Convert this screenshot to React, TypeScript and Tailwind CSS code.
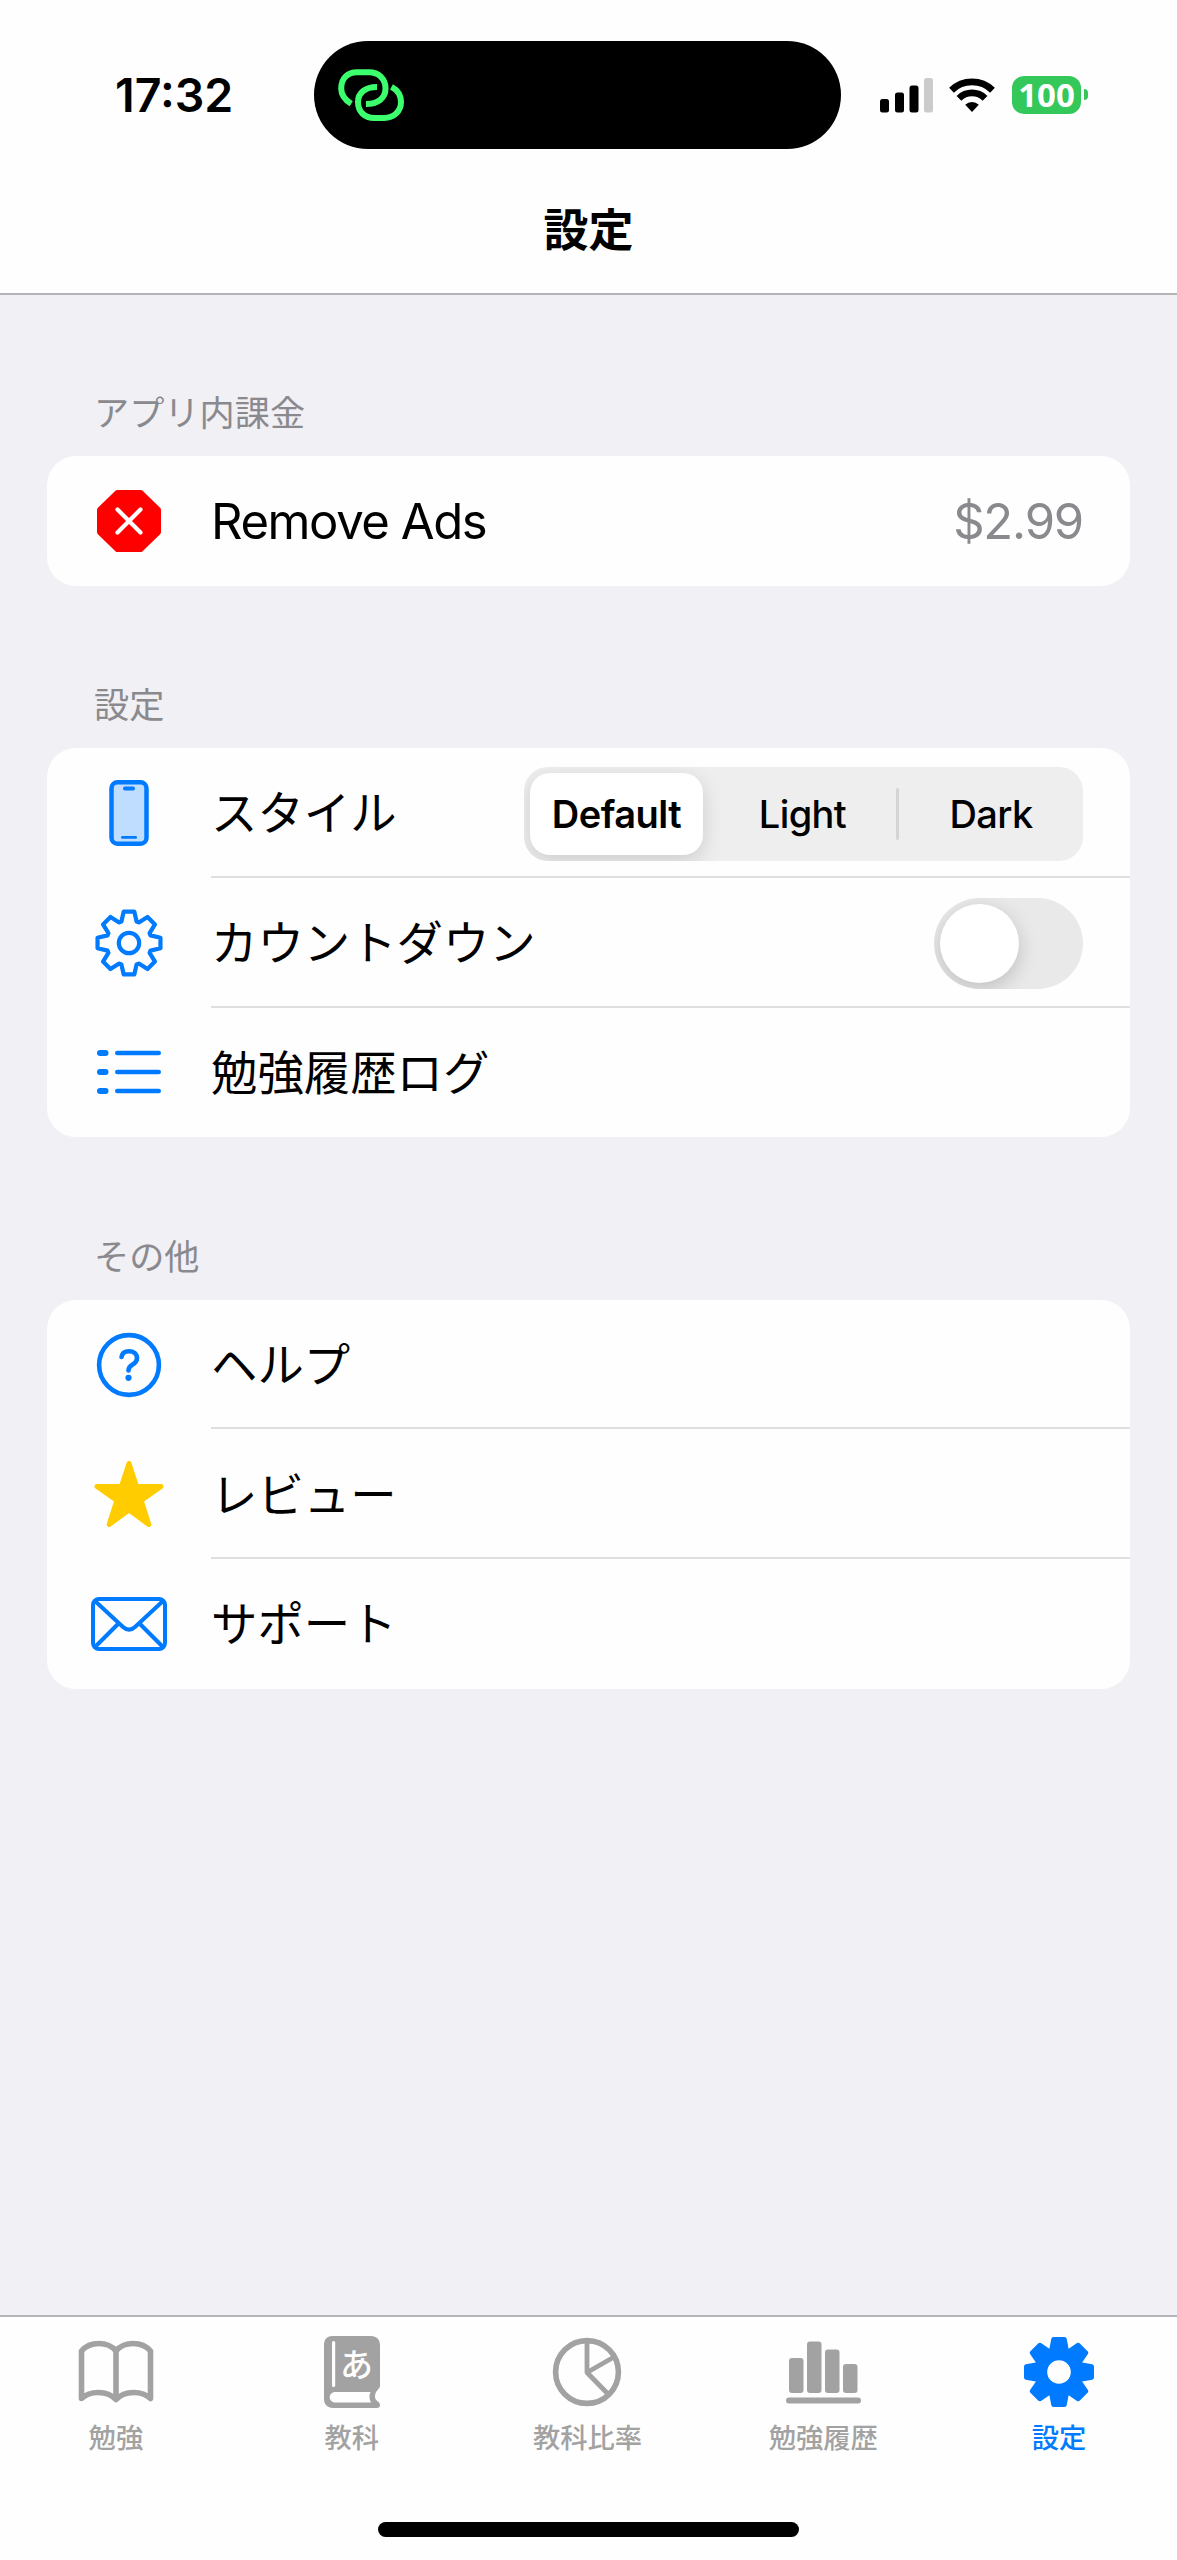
import type { ReactNode } from "react";

const BLUE = "#007aff";
const GRAY = "#a2a2a2";

/* ---------- ICONS ---------- */

// closed outline of an 8-tooth gear centred on 0,0
function gearPath(outer: number, inner: number) {
  const pts: string[] = [];
  for (let i = 0; i < 8; i++) {
    const a = i * 45;
    const ring: [number, number][] = [
      [inner, a - 19.5],
      [outer, a - 9.5],
      [outer, a + 9.5],
      [inner, a + 19.5],
    ];
    for (const [r, deg] of ring) {
      const t = ((deg - 90) * Math.PI) / 180;
      pts.push(`${(r * Math.cos(t)).toFixed(2)} ${(r * Math.sin(t)).toFixed(2)}`);
    }
  }
  return `M${pts.join("L")}Z`;
}

function LinkIcon() {
  return (
    <svg width="68" height="54" viewBox="0 0 68 54" fill="none" stroke="#3cff6e" strokeWidth="6">
      <path d="M14.2 35.8C8 32 4.2 27 4.2 20.5C4.2 10 11 4.2 20 4.2H32C42 4.2 48.5 11 48.5 20.5C48.5 30 41 36 29 36" />
      <path d="M40 19C28 19 21 25 21 34C21 44 28 50 37 50H47C57 50 64 43 64 34C64 27 60.5 22 54.5 18.8" />
    </svg>
  );
}

function SignalIcon() {
  return (
    <svg width="54" height="36" viewBox="0 0 54 36">
      <rect x="0" y="22" width="9" height="13.5" rx="2.5" />
      <rect x="15" y="15.5" width="9" height="20" rx="2.5" />
      <rect x="29.5" y="8.5" width="9" height="27" rx="2.5" />
      <rect x="44" y="1" width="9" height="34.5" rx="2.5" fill="#cbcbcb" />
    </svg>
  );
}

function WifiIcon() {
  return (
    <svg width="46" height="36" viewBox="0 0 46 36" fill="none" stroke="#000" strokeWidth="6.8">
      <path d="M2.5 13.2A29.5 29.5 0 0 1 43.5 13.2" />
      <path d="M10 21.3A18.5 18.5 0 0 1 36 21.3" />
      <path d="M16.2 27.7A9.8 9.8 0 0 1 29.8 27.7L23 35Z" fill="#000" stroke="none" />
    </svg>
  );
}

function RemoveIcon() {
  return (
    <svg width="64" height="62" viewBox="0 0 64 62">
      <path
        d="M20.5 3H43.5L61 20V42L43.5 59H20.5L3 42V20Z"
        fill="#ff0000"
        stroke="#ff0000"
        strokeWidth="6"
        strokeLinejoin="round"
      />
      <path d="M20.5 19.5L43.5 42.5M43.5 19.5L20.5 42.5" stroke="#fff" strokeWidth="4.2" strokeLinecap="round" />
    </svg>
  );
}

function PhoneIcon() {
  return (
    <svg width="40" height="66" viewBox="0 0 40 66">
      <rect x="2.5" y="2.3" width="35" height="61.4" rx="6" fill="#bfdeff" stroke={BLUE} strokeWidth="4.5" />
      <rect x="14" y="6.5" width="12" height="4" rx="2" fill={BLUE} />
      <rect x="12" y="56" width="16" height="2.8" rx="1.4" fill={BLUE} />
    </svg>
  );
}

function GearOutlineIcon() {
  return (
    <svg width="70" height="70" viewBox="-35 -35 70 70" fill="none" stroke={BLUE} strokeWidth="4.2" strokeLinejoin="round">
      <path d={gearPath(31.9, 22.8)} />
      <circle r="10.2" />
    </svg>
  );
}

function ListIcon() {
  return (
    <svg width="66" height="46" viewBox="0 0 66 46" fill={BLUE}>
      {[4, 23, 42].map((y) => (
        <g key={y}>
          <rect x="1" y={y - 3} width="11.5" height="6" rx="3" />
          <rect x="19" y={y - 2.2} width="46" height="4.4" rx="2.2" />
        </g>
      ))}
    </svg>
  );
}

function HelpIcon() {
  return (
    <svg width="66" height="66" viewBox="0 0 66 66" fill="none" stroke={BLUE}>
      <circle cx="33" cy="33" r="29.9" strokeWidth="4.6" />
      <path
        d="M25.5 25C26 21 29 19.2 33 19.2C37.5 19.2 41 22 41 26C41 29.5 39 31.3 36 33C33.5 34.5 32.5 35.5 32.5 38.5"
        strokeWidth="4.6"
        strokeLinecap="round"
      />
      <circle cx="32.5" cy="45.8" r="3.1" fill={BLUE} stroke="none" />
    </svg>
  );
}

function StarIcon() {
  return (
    <svg width="70" height="68" viewBox="0 0 70 68">
      <path
        d="M35 3.5L42.5 26.4H67L47.2 40.5L54.8 64.5L35 49.9L15.2 64.5L22.8 40.5L3 26.4H27.5Z"
        fill="#ffcc00"
        stroke="#ffcc00"
        strokeWidth="5"
        strokeLinejoin="round"
      />
    </svg>
  );
}

function MailIcon() {
  return (
    <svg width="76" height="54" viewBox="0 0 76 54" fill="none" stroke={BLUE} strokeWidth="4">
      <rect x="2" y="2" width="72" height="50" rx="6" />
      <path d="M4 4L32 30C36 33.6 40 33.6 44 30L72 4M4 50L27.5 26.5M72 50L48.5 26.5" />
    </svg>
  );
}

function BookIcon() {
  return (
    <svg width="76" height="64" viewBox="0 0 76 64" fill="none" stroke={GRAY} strokeWidth="5.6" strokeLinejoin="round">
      <path d="M38 11C30 1 12 1 3.5 11V58.5C12 50.5 29 50 38 59.5C47 50 64 50.5 72.5 58.5V11C64 1 46 1 38 11V59" />
    </svg>
  );
}

function DictionaryIcon() {
  return (
    <svg width="58" height="74" viewBox="0 0 58 74">
      <path
        d="M9 1H48C53.5 1 57 4.5 57 10V51C57 54 52 55.5 52 61.5C52 66.5 57 66 57 70C57 72 56 73 54 73H10C4.5 73 1 69.5 1 64V10C1 4.5 4 1 9 1Z"
        fill={GRAY}
      />
      <path d="M12.5 57H47.5C46 60 46 64 48 67.5H12.5C4.8 67.5 4.8 57 12.5 57Z" fill="#fefefe" />
      <rect x="9" y="6" width="3.2" height="46" rx="1.6" fill="#fefefe" />
      <text x="33.5" y="42" textAnchor="middle" fontSize="33" fontWeight="500" fill="#fefefe">
        あ
      </text>
    </svg>
  );
}

function PieIcon() {
  return (
    <svg width="70" height="70" viewBox="-35 -35 70 70" fill="none" stroke={GRAY}>
      <circle r="31.4" strokeWidth="5.6" />
      <path d="M0 -31V0.5L27 -15M0 0.5L22 23" strokeWidth="4.8" strokeLinejoin="round" />
    </svg>
  );
}

function BarsIcon() {
  return (
    <svg width="75" height="63" viewBox="0 0 75 63" fill={GRAY}>
      <rect x="3" y="17" width="14.5" height="35" rx="3" />
      <rect x="21" y="0.5" width="14.5" height="51.5" rx="3" />
      <rect x="39" y="8.5" width="14.5" height="43.5" rx="3" />
      <rect x="57" y="23" width="14.5" height="29" rx="3" />
      <rect x="0" y="56.5" width="75" height="6" rx="3" />
    </svg>
  );
}

function GearSolidIcon() {
  return (
    <svg width="72" height="72" viewBox="-36 -36 72 72">
      <path d={gearPath(33.2, 22.8)} fill={BLUE} stroke={BLUE} strokeWidth="4.5" strokeLinejoin="round" />
      <circle r="11.8" fill="#fefefe" />
    </svg>
  );
}

/* ---------- LIST ---------- */

type Item = {
  label: string;
  icon: ReactNode;
  right?: ReactNode;
};

function StylePicker() {
  return (
    <div className="flex h-[94px] w-[559px] items-center overflow-hidden rounded-[24px] bg-[#eeeeee] text-[38px] font-medium tracking-[-0.6px]">
      <div className="ml-1.5 flex h-[82px] w-[173px] items-center justify-center rounded-[20px] bg-white font-semibold tracking-[-0.5px] shadow-[0_6px_20px_rgba(0,0,0,0.14)]">
        Default
      </div>
      <div className="ml-[7px] flex w-[185px] items-center justify-center">Light</div>
      <div className="ml-px h-[52px] w-[3px] rounded-full bg-[#d5d5d5]" />
      <div className="flex flex-1 items-center justify-center">Dark</div>
    </div>
  );
}

function Toggle() {
  return (
    <div className="flex h-[91px] w-[149px] items-center overflow-hidden rounded-full bg-[#e9e9e9] pl-1.5">
      <div className="size-[79px] rounded-full bg-white shadow-[0_6px_20px_rgba(0,0,0,0.18)]" />
    </div>
  );
}

const sections: { title: string; items: Item[] }[] = [
  {
    title: "アプリ内課金",
    items: [
      {
        label: "Remove Ads",
        icon: <RemoveIcon />,
        right: <span className="text-[49px] tracking-[-1.2px] text-[#8a8a8e]">$2.99</span>,
      },
    ],
  },
  {
    title: "設定",
    items: [
      { label: "スタイル", icon: <PhoneIcon />, right: <StylePicker /> },
      { label: "カウントダウン", icon: <GearOutlineIcon />, right: <Toggle /> },
      { label: "勉強履歴ログ", icon: <ListIcon /> },
    ],
  },
  {
    title: "その他",
    items: [
      { label: "ヘルプ", icon: <HelpIcon /> },
      { label: "レビュー", icon: <StarIcon /> },
      { label: "サポート", icon: <MailIcon /> },
    ],
  },
];

const tabs = [
  { label: "勉強", icon: <BookIcon />, active: false },
  { label: "教科", icon: <DictionaryIcon />, active: false },
  { label: "教科比率", icon: <PieIcon />, active: false },
  { label: "勉強履歴", icon: <BarsIcon />, active: false },
  { label: "設定", icon: <GearSolidIcon />, active: true },
];

function Row({ item, last }: { item: Item; last: boolean }) {
  const latin = item.label === "Remove Ads";
  return (
    <div className="flex h-[129.7px]">
      <div className="flex w-[164px] items-center justify-center pr-px">{item.icon}</div>
      <div
        className={`flex flex-1 items-center justify-between border-b-2 pt-[3px] pr-[47px] ${
          last ? "border-transparent" : "border-[#dfdfe0]"
        }`}
      >
        <span className={latin ? "text-[49px] tracking-[-1.4px]" : "text-[46.4px]"}>{item.label}</span>
        {item.right}
      </div>
    </div>
  );
}

export default function App() {
  return (
    <div
      lang="ja"
      className="flex h-[2560px] w-[1177px] flex-col overflow-hidden bg-[#f1f0f5] font-['Inter','Noto_Sans_CJK_JP',sans-serif] leading-none text-black"
    >
      <header className="h-[295px] border-b-2 border-[#b5b5b7] bg-[#fefefe]">
        <div className="flex h-[189px] items-center">
          <span className="w-[314px] pt-0.5 pl-[115px] text-[46.5px] font-semibold">17:32</span>
          <div className="flex h-[108px] w-[527px] items-center rounded-[54px] bg-black pl-[23px]">
            <LinkIcon />
          </div>
          <div className="ml-[39px] flex items-center">
            <SignalIcon />
            <div className="ml-[15px]">
              <WifiIcon />
            </div>
            <div className="ml-[17px] flex h-[38px] w-[69px] items-center justify-center rounded-xl bg-[#34c759] font-['Noto_Sans',sans-serif] text-[33px] font-bold text-white">
              100
            </div>
            <div className="ml-[3px] h-[11px] w-1 rounded-r-full bg-[#34c759]" />
          </div>
        </div>
        <h1 className="mt-[19px] text-center text-[45px] font-bold">設定</h1>
      </header>

      <main className="flex-1 px-[47px]">
        {sections.map((s, i) => (
          <section key={s.title} className={i === 0 ? "pt-[101px]" : "pt-[102.5px]"}>
            <h2 className="h-[60px] pl-[47px] text-[35.2px] leading-[35px] text-[#8a8a8e]">{s.title}</h2>
            <div className="overflow-hidden rounded-[29px] bg-[#fefefe]">
              {s.items.map((item, n) => (
                <Row key={item.label} item={item} last={n === s.items.length - 1} />
              ))}
            </div>
          </section>
        ))}
      </main>

      <nav className="flex h-[245px] flex-col border-t-2 border-[#b5b5b7] bg-[#fefefe]">
        <div className="-ml-0.5 flex w-[1179px] pt-[18px]">
          {tabs.map((t) => (
            <div
              key={t.label}
              className={`flex flex-1 flex-col items-center text-[27.3px] font-medium ${
                t.active ? "text-[#007aff]" : "text-[#a2a2a2]"
              }`}
            >
              <div className="flex h-[74px] items-center">{t.icon}</div>
              <span className="mt-4">{t.label}</span>
            </div>
          ))}
        </div>
        <div className="mx-auto mt-auto mb-[23px] h-[15px] w-[421px] rounded-full bg-black" />
      </nav>
    </div>
  );
}
